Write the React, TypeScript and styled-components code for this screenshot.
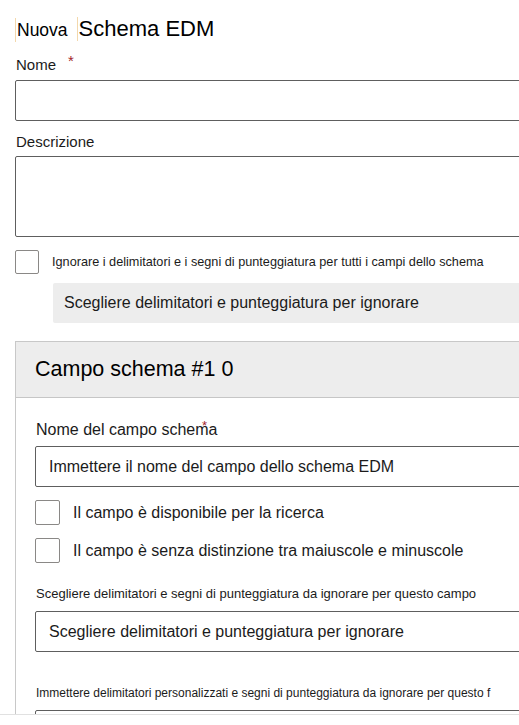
import React from "react";
import styled, { createGlobalStyle } from "styled-components";

const GlobalStyle = createGlobalStyle`
  html, body {
    margin: 0;
    padding: 0;
    background: #ffffff;
    overflow: hidden;
  }
  body {
    font-family: "Liberation Sans", Arial, sans-serif;
    color: #1b1b1b;
  }
`;

const Viewport = styled.div`
  height: 714px;
  overflow: hidden;
  border-bottom: 1px solid #e1e1e1;
`;

const Page = styled.div`
  width: 640px;
  padding-left: 15px;
  padding-top: 17px;
`;

const TitleRow = styled.div`
  display: flex;
  align-items: baseline;
  height: 24px;
`;

const TitleBit = styled.span<{ $size: number }>`
  font-size: ${(p) => p.$size}px;
  line-height: 24px;
  color: #000;
  border-left: 1px solid #f3d8ac;
  padding-left: 1px;
  margin-right: 9px;
`;

const Label = styled.div<{ $top: number; $bottom: number; $size?: number }>`
  position: relative;
  font-size: ${(p) => p.$size ?? 15}px;
  line-height: 20px;
  height: 20px;
  color: #1b1b1b;
  margin-top: ${(p) => p.$top}px;
  margin-bottom: ${(p) => p.$bottom}px;
  padding-left: 1px;
`;

const SmallLabel = styled.div<{ $top: number; $bottom: number; $size?: number }>`
  font-size: ${(p) => p.$size ?? 12}px;
  line-height: 16px;
  color: #1b1b1b;
  margin-top: ${(p) => p.$top}px;
  margin-bottom: ${(p) => p.$bottom}px;
  padding-left: 1px;
  white-space: nowrap;
`;

const Required = styled.span`
  position: relative;
  top: -4px;
  color: #a4262c;
  font-size: 15px;
  margin-left: 12px;
`;

const OverlayStar = styled.span`
  position: absolute;
  left: 167px;
  top: -4px;
  color: #a4262c;
  font-size: 13px;
`;

const TextInput = styled.div<{ $height?: number }>`
  box-sizing: border-box;
  height: ${(p) => p.$height ?? 41}px;
  border: 1px solid #5e5e5e;
  border-radius: 2px;
  display: flex;
  align-items: center;
  padding-left: 13px;
  font-size: 16px;
  color: #1b1b1b;
  background: #fff;
`;

const CheckRow = styled.div<{ $top: number; $gap: number; $box: number }>`
  display: flex;
  align-items: center;
  gap: ${(p) => p.$gap}px;
  margin-top: ${(p) => p.$top}px;
  height: ${(p) => p.$box}px;
`;

const Box = styled.span<{ $size: number }>`
  box-sizing: border-box;
  width: ${(p) => p.$size}px;
  height: ${(p) => p.$size}px;
  border: 1px solid #8a8886;
  border-radius: 2px;
  flex: none;
`;

const CheckText = styled.span<{ $size: number }>`
  font-size: ${(p) => p.$size}px;
  color: #1b1b1b;
  white-space: nowrap;
`;

const GreyButton = styled.div`
  margin-top: 9px;
  margin-left: 38px;
  height: 40px;
  background: #ededed;
  border-radius: 2px 0 0 2px;
  display: flex;
  align-items: center;
  padding-left: 11px;
  font-size: 16px;
  color: #1b1b1b;
`;

const Panel = styled.section`
  margin-top: 18px;
  border-top: 1px solid #c8c8c8;
  border-left: 1px solid #c8c8c8;
`;

const PanelHeader = styled.div`
  box-sizing: border-box;
  height: 56px;
  background: #ededed;
  border-bottom: 1px solid #c6c6c6;
  display: flex;
  align-items: center;
  padding-left: 19px;
  font-size: 21.5px;
  color: #000;
`;

const PanelBody = styled.div`
  padding-left: 19px;
  padding-bottom: 40px;
`;

export default function App() {
  return (
    <>
      <GlobalStyle />
      <Viewport>
        <Page>
          <TitleRow>
            <TitleBit $size={17.5}>Nuova</TitleBit>
            <TitleBit $size={22}>Schema EDM</TitleBit>
          </TitleRow>

          <Label $top={14} $bottom={5}>
            Nome<Required>*</Required>
          </Label>
          <TextInput />

          <Label $top={11} $bottom={4}>
            Descrizione
          </Label>
          <TextInput $height={81} />

          <CheckRow $top={13} $gap={13} $box={24}>
            <Box $size={24} />
            <CheckText $size={12.7}>
              Ignorare i delimitatori e i segni di punteggiatura per tutti i
              campi dello schema
            </CheckText>
          </CheckRow>
          <GreyButton>Scegliere delimitatori e punteggiatura per ignorare</GreyButton>

          <Panel>
            <PanelHeader>Campo schema #1 0</PanelHeader>
            <PanelBody>
              <Label $top={22} $bottom={6} $size={16}>
                Nome del campo schema
                <OverlayStar>*</OverlayStar>
              </Label>
              <TextInput>Immettere il nome del campo dello schema EDM</TextInput>

              <CheckRow $top={13} $gap={13} $box={25}>
                <Box $size={25} />
                <CheckText $size={16}>Il campo è disponibile per la ricerca</CheckText>
              </CheckRow>
              <CheckRow $top={13} $gap={13} $box={25}>
                <Box $size={25} />
                <CheckText $size={16}>
                  Il campo è senza distinzione tra maiuscole e minuscole
                </CheckText>
              </CheckRow>

              <SmallLabel $top={23} $bottom={9} $size={13}>
                Scegliere delimitatori e segni di punteggiatura da ignorare per
                questo campo
              </SmallLabel>
              <TextInput>Scegliere delimitatori e punteggiatura per ignorare</TextInput>

              <SmallLabel $top={33} $bottom={9}>
                Immettere delimitatori personalizzati e segni di punteggiatura
                da ignorare per questo f
              </SmallLabel>
              <TextInput />
            </PanelBody>
          </Panel>
        </Page>
      </Viewport>
    </>
  );
}
